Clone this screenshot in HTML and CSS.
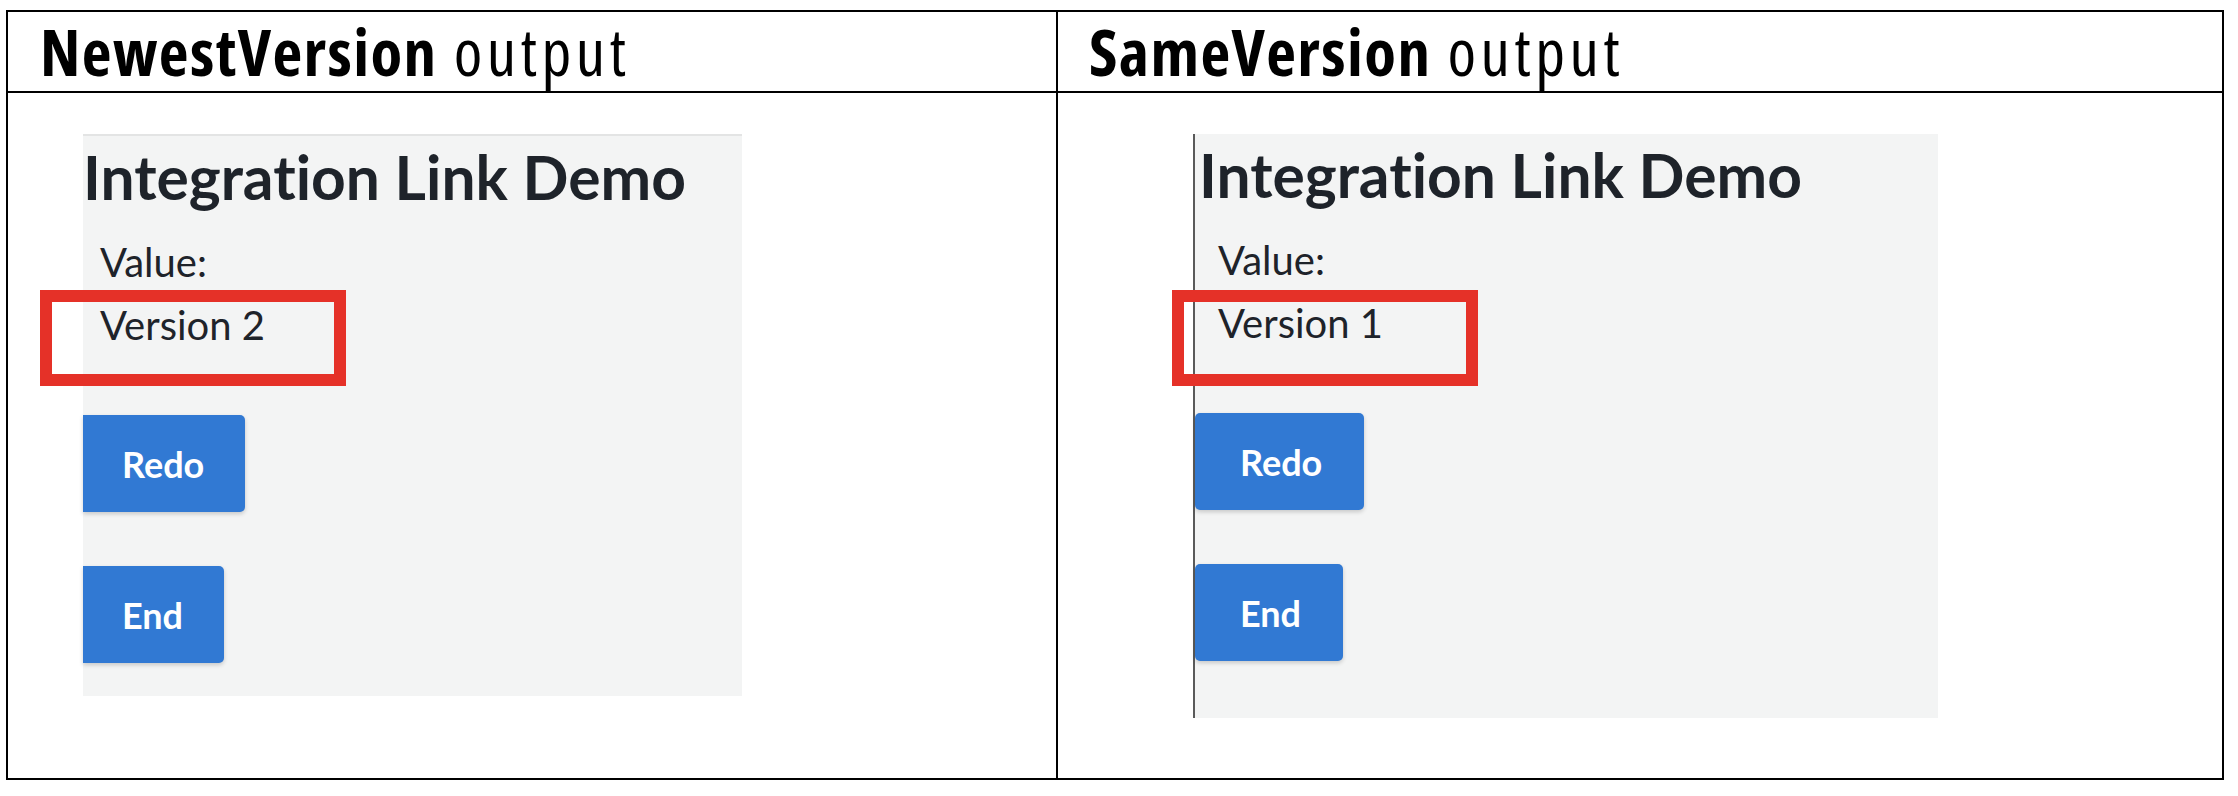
FILE: index.html
```html
<!DOCTYPE html>
<html lang="en">
<head>
<meta charset="utf-8">
<title>NewestVersion vs SameVersion output</title>
<link rel="stylesheet" href="styles.css">
</head>
<body>
  <div class="sheet">
    <div class="cell head col-left"><b>NewestVersion</b> <span class="thin">output</span></div>
    <div class="cell head col-right"><b>SameVersion</b> <span class="thin">output</span></div>

    <div class="cell body col-left body-left">
      <div class="shot shot-left">
        <h1 class="title">Integration Link Demo</h1>
        <div class="label">Value:</div>
        <div class="value">Version 2</div>
        <div class="actions">
          <button class="btn">Redo</button>
          <button class="btn">End</button>
        </div>
      </div>
      <div class="mark mark-left"></div>
    </div>

    <div class="cell body col-right body-right">
      <div class="shot shot-right">
        <h1 class="title">Integration Link Demo</h1>
        <div class="label">Value:</div>
        <div class="value">Version 1</div>
        <div class="actions">
          <button class="btn">Redo</button>
          <button class="btn">End</button>
        </div>
      </div>
      <div class="mark mark-right"></div>
    </div>
  </div>
</body>
</html>
```
FILE: styles.css
```css
* { box-sizing: border-box; }

html, body {
  margin: 0;
  padding: 0;
  background: #ffffff;
}

body {
  padding: 10px 0 0 6px;
}

.sheet {
  display: grid;
  grid-template-columns: 1050px 1fr;
  grid-template-rows: 81px 1fr;
  width: 2218px;
  height: 770px;
  border: 2px solid #000;
}

.cell.col-left {
  border-right: 2px solid #000;
}

.head {
  border-bottom: 2px solid #000;
  font-family: "Open Sans", "DejaVu Sans", sans-serif;
  font-stretch: 75%;
  font-size: 65px;
  line-height: 79px;
  font-weight: 400;
  color: #000;
  white-space: nowrap;
}

.head.col-left { padding-left: 32px; }
.head.col-right { padding-left: 31px; }

.head b {
  font-weight: 700;
  letter-spacing: 1.4px;
}

.head .thin {
  letter-spacing: 4.5px;
  margin-left: 4px;
}

.body {
  position: relative;
  padding-top: 41px;
}

.body-left { padding-left: 75px; }
.body-right { padding-left: 135px; }

.shot {
  background: #f3f4f4;
  font-family: Lato, "Open Sans", sans-serif;
  font-variant-ligatures: none;
  color: #1e232a;
  display: flex;
  flex-direction: column;
  align-items: flex-start;
}

.shot-left {
  width: 659px;
  height: 562px;
  border-top: 2px solid #e3e4e4;
  padding-top: 4px;
}

.shot-right {
  width: 745px;
  height: 584px;
  border-left: 2px solid #5a5a5a;
  padding-top: 4px;
}

.title {
  margin: 0;
  font-size: 60.5px;
  font-weight: 700;
  line-height: 73px;
  white-space: nowrap;
}

.shot-right .title { padding-left: 4px; }

.label,
.value {
  font-size: 40px;
  line-height: 48px;
  font-weight: 400;
}

.label { margin-top: 25px; }
.value { margin-top: 15px; }

.shot-left .label,
.shot-left .value { padding-left: 17px; }

.shot-right .label,
.shot-right .value { padding-left: 23px; }

.actions {
  margin-top: 66px;
  display: flex;
  flex-direction: column;
  align-items: flex-start;
  gap: 54px;
}

.btn {
  height: 97px;
  border: none;
  border-radius: 5px;
  background: #3179d3;
  color: #fff;
  font-family: Lato, "Open Sans", sans-serif;
  font-size: 36px;
  font-weight: 700;
  box-shadow: 0 2px 4px rgba(0, 0, 0, 0.18);
  display: flex;
  align-items: center;
}

.shot-left .btn { padding: 0 41px 0 39px; border-top-left-radius: 0; border-bottom-left-radius: 0; }
.shot-right .btn { padding: 0 42px 0 45px; }

.mark {
  position: absolute;
  top: 197px;
  width: 306px;
  height: 96px;
  border: 12px solid #e53128;
}

.mark-left { left: 32px; }
.mark-right { left: 114px; }
```
